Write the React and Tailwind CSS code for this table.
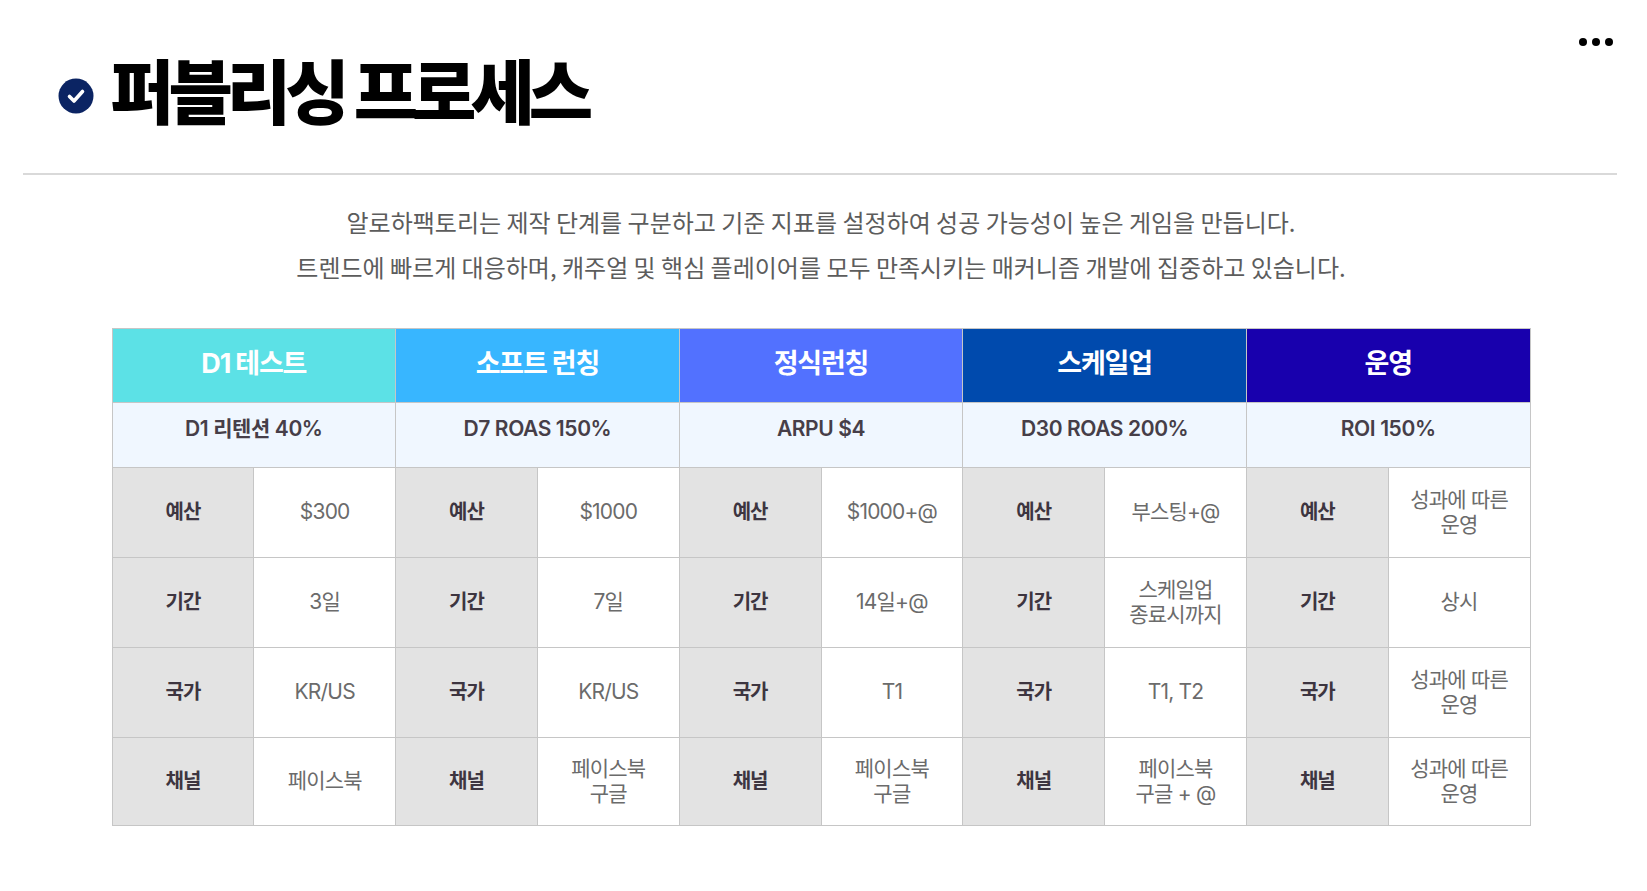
import React from 'react';

const stages = [
  {
    title: 'D1 테스트',
    color: 'bg-[#5ce1e6]',
    goal: 'D1 리텐션 40%',
    values: ['$300', '3일', 'KR/US', '페이스북'],
  },
  {
    title: '소프트 런칭',
    color: 'bg-[#38b6ff]',
    goal: 'D7 ROAS 150%',
    values: ['$1000', '7일', 'KR/US', '페이스북\n구글'],
  },
  {
    title: '정식런칭',
    color: 'bg-[#5271ff]',
    goal: 'ARPU $4',
    values: ['$1000+@', '14일+@', 'T1', '페이스북\n구글'],
  },
  {
    title: '스케일업',
    color: 'bg-[#004aad]',
    goal: 'D30 ROAS 200%',
    values: ['부스팅+@', '스케일업\n종료시까지', 'T1, T2', '페이스북\n구글 + @'],
  },
  {
    title: '운영',
    color: 'bg-[#1800ad]',
    goal: 'ROI 150%',
    values: ['성과에 따른\n운영', '상시', '성과에 따른\n운영', '성과에 따른\n운영'],
  },
];

const labels = ['예산', '기간', '국가', '채널'];

const CheckBadge = () => (
  <svg width="36" height="36" viewBox="0 0 36 36" className="shrink-0">
    <circle cx="18" cy="18" r="17.5" fill="#0b2463" />
    <path
      d="M11.5 18.5 L16 23 L24.5 13.5"
      fill="none"
      stroke="#ffffff"
      strokeWidth="3.6"
      strokeLinecap="round"
      strokeLinejoin="round"
    />
  </svg>
);

const App = () => {
  return (
    <div className="relative min-h-[891px] w-full bg-white font-['Inter','Noto_Sans_CJK_KR',sans-serif]">
      {/* 상단 메뉴 */}
      <button className="absolute right-[34px] top-[38px] flex gap-[5px]">
        <span className="block h-[8px] w-[8px] rounded-full bg-black" />
        <span className="block h-[8px] w-[8px] rounded-full bg-black" />
        <span className="block h-[8px] w-[8px] rounded-full bg-black" />
      </button>

      <div className="flex h-[173px] items-center gap-[16px] pl-[58px] pt-[18px]">
        <CheckBadge />
        <h1 className="mb-[14px] font-['Noto_Sans_CJK_KR',sans-serif] text-[70px] font-black leading-none tracking-[-6px] text-black">
          퍼블리싱 프로세스
        </h1>
      </div>
      <div className="ml-[23px] mr-[30px] h-[2px] bg-[#d9d9d9]" />

      <div className="w-[1642px]">
        <p className="mt-[24px] text-center font-['Noto_Sans_CJK_KR',sans-serif] text-[24px] leading-[45px] tracking-[0px] text-[#5c5c5c]">
          알로하팩토리는 제작 단계를 구분하고 기준 지표를 설정하여 성공 가능성이 높은 게임을 만듭니다.
          <br />
          트렌드에 빠르게 대응하며, 캐주얼 및 핵심 플레이어를 모두 만족시키는 매커니즘 개발에 집중하고 있습니다.
        </p>

        <div className="mx-auto mt-[39px] grid w-[1419px] grid-cols-10 grid-rows-[73px_64px_89px_89px_89px_87px] gap-px bg-[#c6c6c6] p-px">
          {stages.map((stage) => (
            <div
              key={stage.title}
              className={`col-span-2 flex items-center justify-center pb-[2px] text-[27px] font-bold tracking-[-1.2px] text-white ${stage.color}`}
            >
              {stage.title}
            </div>
          ))}

          {stages.map((stage) => (
            <div
              key={stage.goal}
              className="col-span-2 flex items-center justify-center bg-[#f0f7ff] pb-[12px] text-[21px] font-semibold tracking-[-0.4px] text-[#463e48]"
            >
              {stage.goal}
            </div>
          ))}

          {labels.map((label, row) => (
            <React.Fragment key={label}>
              {stages.map((stage) => (
                <React.Fragment key={stage.title + label}>
                  <div className="flex items-center justify-center bg-[#e3e3e3] pb-[2px] text-[20px] font-bold tracking-[-1px] text-[#3d3540]">
                    {label}
                  </div>
                  <div className="flex items-center justify-center whitespace-pre-line bg-white pb-[2px] text-center text-[21px] leading-[25px] tracking-[-0.8px] text-[#6b6b6b]">
                    {stage.values[row]}
                  </div>
                </React.Fragment>
              ))}
            </React.Fragment>
          ))}
        </div>
      </div>
    </div>
  );
};

export default App;
